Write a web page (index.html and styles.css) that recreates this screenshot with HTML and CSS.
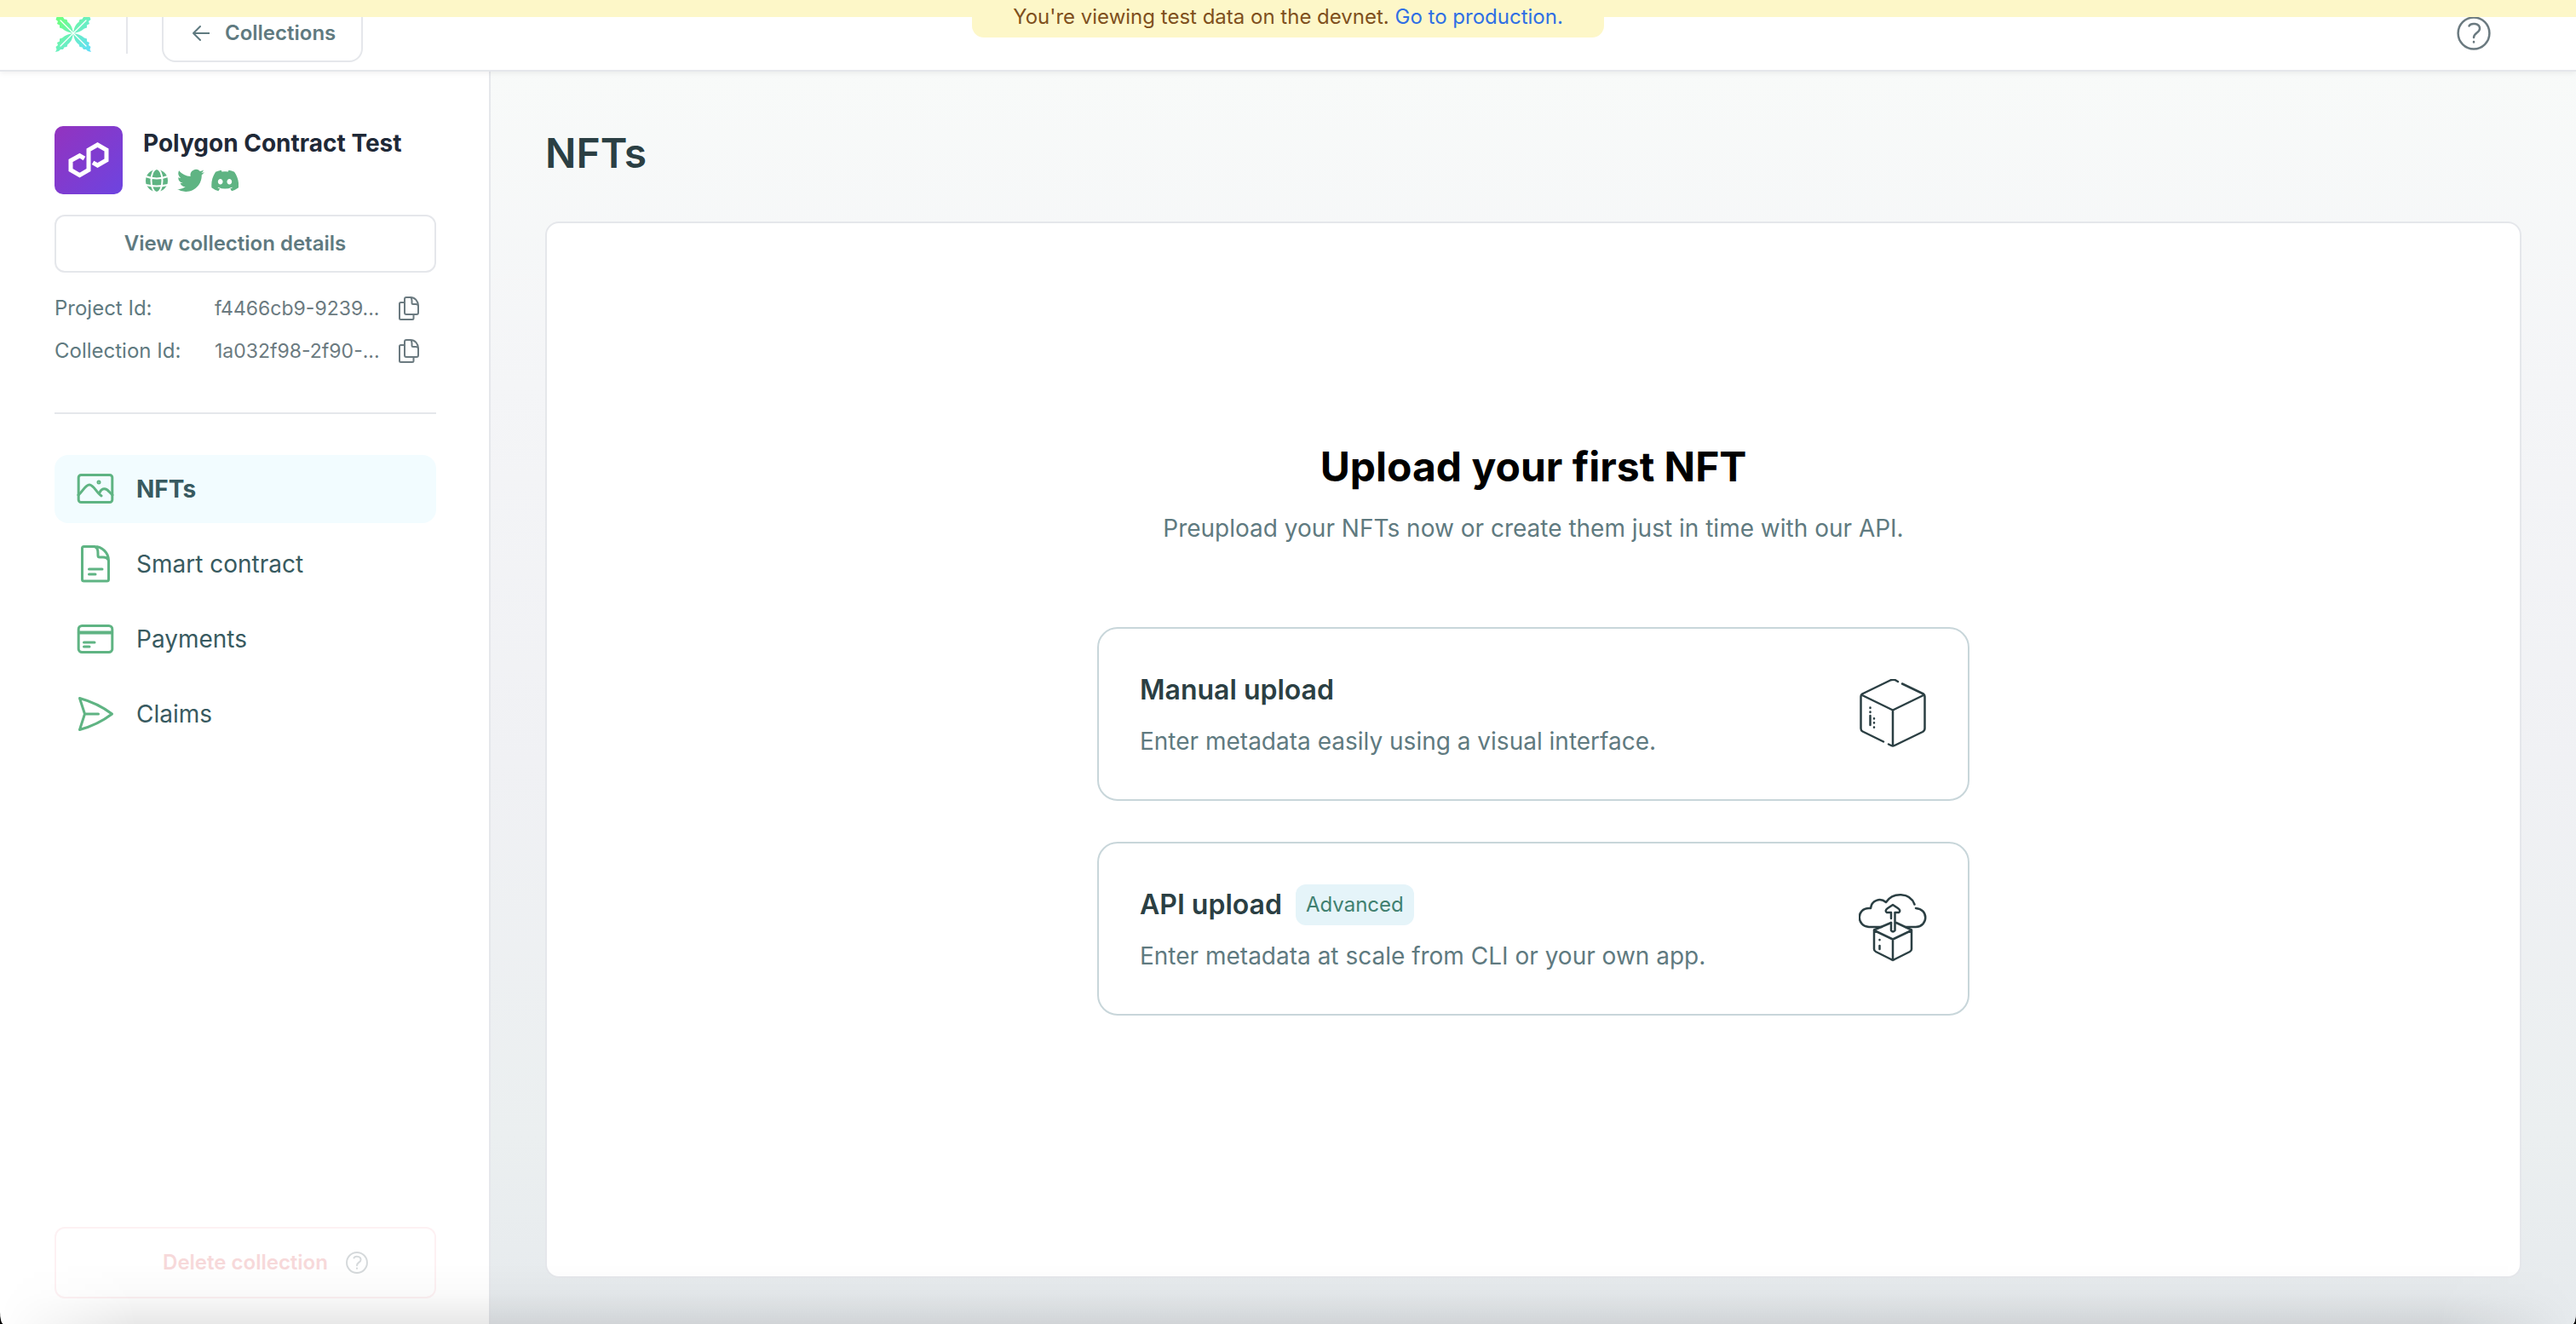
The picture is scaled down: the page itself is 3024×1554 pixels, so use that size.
FILE: index.html
```html
<!DOCTYPE html>
<html lang="en">
<head>
<meta charset="utf-8">
<title>NFTs - Polygon Contract Test</title>
<link rel="stylesheet" href="styles.css">
</head>
<body>
<svg class="sprite" aria-hidden="true">
  <defs>
    <symbol id="help" viewBox="0 0 40 40">
      <circle cx="20" cy="20" r="18.4"/>
      <path d="M14.5 11.5c2-4 12.500-3.500 12.500 3 0 5-7 5-7 10.500"/>
      <path d="M20 30v.6"/>
    </symbol>
    <symbol id="copy" viewBox="0 0 24 28">
      <path d="M7 7H2.500Q1 7 1 8.500V25.500Q1 27 2.500 27H16Q17.500 27 17.500 25.500V21"/>
      <path d="M7 3Q7 1 9 1H14C19 1 23 5.500 23 11V19Q23 21 21 21H9Q7 21 7 19Z"/>
      <path d="M14 1Q15.500 2 15.500 5V7.500Q15.500 9 17 9H20Q22.500 9 23 11"/>
    </symbol>
  </defs>
</svg>

<div class="app">
  <div class="banner">
    <p class="banner-note">You're viewing test data on the devnet. <a href="#">Go to production.</a></p>
  </div>

  <header class="topbar">
    <a class="brand" href="#" aria-label="Home">
      <svg width="44" height="46" viewBox="0 0 44 46">
        <defs>
          <linearGradient id="mint" x1="0" y1="0" x2="1" y2="1">
            <stop offset="0.15" stop-color="#6dff83"/>
            <stop offset="0.5" stop-color="#6bf0bd"/>
            <stop offset="1" stop-color="#5fdcff"/>
          </linearGradient>
          <path id="leaf" d="M22 23C21 30 19 34 15.500 36L14.500 39 11.500 39.500 10 42 7 42 5 44 1 45 2.500 42 1.500 39 4 37 3 34 6 32.500 6 29.500 9 28.500C13 25 17 24 22 23Z"/>
          <clipPath id="leaves">
            <use href="#leaf"/>
            <use href="#leaf" transform="matrix(1 0 0 -1 0 46)"/>
            <use href="#leaf" transform="matrix(-1 0 0 1 44 0)"/>
            <use href="#leaf" transform="rotate(180 22 23)"/>
          </clipPath>
        </defs>
        <rect width="44" height="46" fill="url(#mint)" clip-path="url(#leaves)"/>
        <path d="M7 8 37 38M37 8 7 38" fill="none" stroke="#fff" stroke-width="1.200"/>
      </svg>
    </a>
    <span class="rule"></span>
    <button class="btn back" type="button">
      <svg width="20" height="20" viewBox="0 0 20 20"><path d="M19.500 10H1M9 2 1 10 9 18"/></svg>
      Collections
    </button>
    <button class="help-btn" type="button" aria-label="Help"><svg class="help" width="40" height="40"><use href="#help"/></svg></button>
  </header>

  <div class="body">
    <aside class="sidebar">
      <div class="collection">
        <svg class="avatar" width="80" height="80" viewBox="0 0 80 80">
          <defs><linearGradient id="violet" x1="0" y1="0" x2="1" y2="1"><stop offset="0" stop-color="#9333bf"/><stop offset="1" stop-color="#6d44e0"/></linearGradient></defs>
          <rect width="80" height="80" rx="10" fill="url(#violet)"/>
          <path class="polygon" d="M35 38 29.500 34.700 19 40.500V51.500L29.500 57.600 40 51.500V28L50.500 22 61 28V40L50.500 46 45 42.800"/>
        </svg>
        <div class="collection-info">
          <h2>Polygon Contract Test</h2>
          <div class="socials">
            <a href="#" aria-label="Website"><svg width="32" height="32" viewBox="0 0 32 32"><circle cx="16" cy="16" r="13" fill="#5fb483"/><g fill="none" stroke="#fff" stroke-width="2"><ellipse cx="16" cy="16" rx="6.500" ry="14"/><path d="M3 11Q16 16 29 11M3 21Q16 24 29 21"/></g></svg></a>
            <a href="#" aria-label="Twitter"><svg width="32" height="32" viewBox="0 0 24 24"><path fill="#5fb483" d="M23.950 4.570a10 10 0 0 1-2.820.77 4.960 4.960 0 0 0 2.160-2.720c-.95.550-2 .950-3.130 1.180a4.920 4.920 0 0 0-8.380 4.480C7.690 8.090 4.070 6.130 1.640 3.160a4.920 4.920 0 0 0 1.520 6.570 4.900 4.900 0 0 1-2.230-.61v.06a4.920 4.920 0 0 0 3.950 4.820 5 5 0 0 1-2.210.09 4.940 4.940 0 0 0 4.600 3.420A9.870 9.870 0 0 1 0 19.540a13.990 13.990 0 0 0 7.550 2.210c9.050 0 14-7.500 14-13.980 0-.21 0-.42-.02-.63a9.940 9.940 0 0 0 2.420-2.570Z"/></svg></a>
            <a href="#" aria-label="Discord"><svg width="32" height="32" viewBox="0 0 24 24"><path fill="#5fb483" d="M20.320 4.370a19.800 19.800 0 0 0-4.890-1.520c-.21.380-.45.880-.61 1.260a18.300 18.300 0 0 0-5.490 0 12.600 12.600 0 0 0-.62-1.260 19.700 19.700 0 0 0-4.890 1.520C.73 9.040-.12 13.600.3 18.100a19.900 19.900 0 0 0 5.990 3.030c.48-.66.910-1.360 1.280-2.100a13 13 0 0 1-1.930-.92l.47-.37a14.200 14.200 0 0 0 12.060 0l.47.37c-.62.360-1.260.670-1.930.92.370.740.800 1.440 1.280 2.100a19.800 19.800 0 0 0 6-3.030c.5-5.200-.84-9.720-3.670-13.730ZM8.020 15.330c-1.180 0-2.160-1.080-2.160-2.420s.95-2.420 2.160-2.420 2.180 1.100 2.160 2.420c0 1.340-.95 2.420-2.160 2.420Zm7.970 0c-1.180 0-2.150-1.080-2.150-2.420s.95-2.420 2.150-2.420 2.180 1.100 2.160 2.420c0 1.340-.94 2.420-2.160 2.420Z"/></svg></a>
          </div>
        </div>
      </div>
      <button class="btn details" type="button">View collection details</button>
      <dl class="ids">
        <dt>Project Id:</dt>
        <dd>f4466cb9-9239...</dd>
        <dd><button class="copy" type="button" aria-label="Copy project id"><svg width="24" height="28"><use href="#copy"/></svg></button></dd>
        <dt>Collection Id:</dt>
        <dd>1a032f98-2f90-...</dd>
        <dd><button class="copy" type="button" aria-label="Copy collection id"><svg width="24" height="28"><use href="#copy"/></svg></button></dd>
      </dl>
      <nav class="nav">
        <a class="active" href="#">
          <svg width="44" height="44" viewBox="0 0 44 44"><rect x="2.200" y="5.500" width="39.600" height="32" rx="3"/><path d="M2 29C7 25 10 17 15 17C20 17 23 26 29 30M27 26C30 20 35 21 38 25L42 29"/><circle cx="26" cy="14" r="1" /></svg>
          NFTs
        </a>
        <a href="#">
          <svg width="44" height="44" viewBox="0 0 44 44"><path d="M8.500 1.500H21C30 1.500 37.500 9 37.500 18V40Q37.500 42 35.500 42H8.500Q6.500 42 6.500 40V3.500Q6.500 1.500 8.500 1.500ZM21 1.500C25 3 25 6 25 12Q25 14 27 14H31Q36 14 37.500 18M14.500 28H30M14.500 34H22"/></svg>
          Smart contract
        </a>
        <a href="#">
          <svg width="44" height="44" viewBox="0 0 44 44"><rect x="2.200" y="6.500" width="39.600" height="31" rx="4"/><path d="M3 14.500H41" stroke-width="4"/><path d="M8.500 26H21M8.500 31H15"/></svg>
          Payments
        </a>
        <a href="#">
          <svg width="44" height="44" viewBox="0 0 44 44"><path d="M3.500 3.500C18 7.500 31 14 41.500 22C31 30 18 36.500 3.500 40.500L9.500 22ZM9.500 22H25.500"/></svg>
          Claims
        </a>
      </nav>
      <button class="btn delete" type="button" disabled>Delete collection <svg class="help" width="26" height="26"><use href="#help"/></svg></button>
    </aside>

    <main class="main">
      <h1>NFTs</h1>
      <section class="panel">
        <h2>Upload your first NFT</h2>
        <p class="lead">Preupload your NFTs now or create them just in time with our API.</p>
        <div class="options">
          <button class="option" type="button">
            <span class="option-text">
              <span class="option-title">Manual upload</span>
              <span class="option-desc">Enter metadata easily using a visual interface.</span>
            </span>
            <svg width="80" height="80" viewBox="0 0 80 80"><path d="M46 3 43 1.200Q40 0 37 1.500L4 17.500Q2.500 18.500 2.500 20.500V58Q2.500 60.500 4.500 61.500L29 73.500M35 76.500 38 78Q40 79 42 78L75 62Q77.500 60.500 77.500 58V20.500Q77.500 18.500 76 17.500L51 5.500M3 18.500 40 36.500 77 18.500M40 36.500V78"/><path d="M13.500 43V54M13.500 33.500V34M13.500 38.500V39M18 46.200V46.400M18 51.200V51.400M18 56.600V56.800"/></svg>
          </button>
          <button class="option" type="button">
            <span class="option-text">
              <span class="option-title">API upload <span class="badge">Advanced</span></span>
              <span class="option-desc">Enter metadata at scale from CLI or your own app.</span>
            </span>
            <svg width="80" height="80" viewBox="0 0 80 80"><path d="M27 39H12C-3 38-3 17 12 17H14C15 8 25 4 32 10C40-2 60-2 65.500 12.500M67 17C82 18 82 38 67 39H55"/><path d="M38 34 18 42.500V65Q18 67 20 68L38 77Q40 78.500 42 77L60 68Q62 67 62 65V42.500L44 34M18 43 40 53.500 62 43M40 53.500V78M24.500 61V65M24.500 54V54.300"/><path d="M38 29V22H33Q30 20 34 17L40 13 46 17Q50 20 47 22H42.500V43Q40 46 38 43V34"/></svg>
          </button>
        </div>
      </section>
    </main>
  </div>
</div>
</body>
</html>
```
FILE: styles.css
```css
* { box-sizing: border-box; }

html { background: #000; }

body {
  margin: 0;
  font-family: Inter, "Liberation Sans", sans-serif;
  font-size: 24px;
  line-height: 32px;
  color: #5f7a80;
}

h1, h2, p, dl, dd { margin: 0; }
a { text-decoration: none; }
button { font: inherit; color: inherit; background: none; border: 0; padding: 0; cursor: pointer; }
svg { display: block; flex: none; fill: none; stroke-linecap: round; stroke-linejoin: round; }
.sprite { position: absolute; width: 0; height: 0; }

.app {
  position: relative;
  display: flex;
  flex-direction: column;
  min-height: 100vh;
  background: #fff;
  border-radius: 0 0 4px 4px / 0 0 14px 14px;
  overflow: hidden;
}

.app::after {
  content: "";
  position: absolute;
  inset: auto 0 0;
  height: 72px;
  pointer-events: none;
  background: linear-gradient(to bottom, transparent, rgba(0, 0, 0, 0.02) 50%, rgba(0, 0, 0, 0.09));
  -webkit-mask-image: linear-gradient(to right, transparent, #000 160px, #000 calc(100% - 160px), transparent);
  mask-image: linear-gradient(to right, transparent, #000 160px, #000 calc(100% - 160px), transparent);
}

/* Devnet notice, laid over the top bar */
.banner {
  position: absolute;
  inset: 0 0 auto;
  z-index: 2;
  display: flex;
  justify-content: center;
  height: 20px;
  background: #fdf7c8;
}
.banner-note {
  height: 44px;
  padding: 4px 48px 8px;
  border-radius: 0 0 14px 14px;
  background: #fdf7c8;
  color: #7f501d;
}
.banner-note a { color: #2f6fe4; }

.topbar {
  position: relative;
  z-index: 1;
  display: flex;
  align-items: center;
  height: 84px;
  padding: 0 100px 4px 64px;
  border-bottom: 2px solid #e5e7eb;
  background: #fff;
  box-shadow: 0 2px 6px rgba(0, 0, 0, 0.06);
}
.rule { width: 2px; height: 48px; margin: 0 40px; background: #e5e7eb; }

.btn {
  display: flex;
  align-items: center;
  justify-content: center;
  height: 68px;
  border: 2px solid #e5e7eb;
  border-radius: 12px;
  font-weight: 600;
}
.back { gap: 18px; padding: 0 30px 0 34px; border-radius: 16px; }
.back svg { stroke: currentColor; stroke-width: 2; }
.help { stroke: #6b7a80; stroke-width: 2.500px; }
.help-btn { margin-left: auto; }

.body { flex: 1; display: flex; }

.sidebar {
  flex: none;
  display: flex;
  flex-direction: column;
  width: 576px;
  padding: 64px 62px 30px 64px;
  border-right: 2px solid #e5e7eb;
}
.collection { display: flex; gap: 24px; }
.collection h2 { font-size: 28px; line-height: 40px; font-weight: 700; color: #1f2937; }
.avatar .polygon { stroke: #fff; stroke-width: 5; stroke-linecap: butt; stroke-linejoin: miter; }
.socials { display: flex; gap: 8px; margin-top: 8px; }
.details { margin-top: 24px; padding-right: 24px; }

.ids {
  display: grid;
  grid-template-columns: 188px 208px auto;
  row-gap: 18px;
  align-items: center;
  justify-content: start;
  padding: 26px 0 56px;
  border-bottom: 2px solid #e5e7eb;
}
.ids dd { font-size: 23px; color: #6b7a80; }
.copy { display: block; padding: 0 8px; }
.copy svg { stroke: #6b7a80; stroke-width: 2; }

.nav { display: flex; flex-direction: column; gap: 8px; margin-top: 48px; }
.nav a {
  display: flex;
  align-items: center;
  gap: 26px;
  height: 80px;
  padding: 0 26px;
  border-radius: 16px;
  font-size: 28px;
  color: #385a60;
}
.nav .active { background: #f2fcff; font-weight: 700; }
.nav svg { stroke: #5fb483; stroke-width: 3; }

.delete {
  position: relative;
  height: 84px;
  margin-top: auto;
  border-color: #fdf1f3;
  color: #f7d9da;
}
.delete .help { position: absolute; left: 340px; stroke: #d5d9db; stroke-width: 3px; }

.main {
  flex: 1;
  display: flex;
  flex-direction: column;
  padding: 64px 64px 54px;
  background: linear-gradient(#f8faf9, #f4f5f7 25%, #f0f1f4 55%, #ebeff0 85%, #e6eaed);
}
h1 { font-size: 48px; line-height: 64px; font-weight: 600; color: #2b3f43; }
.panel {
  flex: 1;
  display: flex;
  flex-direction: column;
  align-items: center;
  justify-content: center;
  margin-top: 48px;
  padding-bottom: 52px;
  border: 2px solid #e5e7eb;
  border-radius: 16px;
  background: #fff;
}
.panel h2 { font-size: 48px; line-height: 64px; font-weight: 700; color: #000; }
.lead { margin-top: 20px; font-size: 28px; line-height: 40px; }

.options { display: flex; flex-direction: column; gap: 48px; width: 100%; max-width: 1024px; margin-top: 96px; }
.option {
  display: flex;
  align-items: center;
  justify-content: space-between;
  padding: 46px 48px 48px;
  border: 2px solid #c8d6da;
  border-radius: 24px;
  text-align: left;
}
.option-text { display: flex; flex-direction: column; gap: 14px; }
.option-title { display: flex; align-items: center; gap: 16px; height: 52px; font-size: 32px; line-height: 52px; font-weight: 600; color: #2b3f43; }
.option-desc { font-size: 28px; line-height: 40px; }
.option svg { stroke: #2b3f43; stroke-width: 2.500; }
.badge {
  padding: 8px 12px;
  border-radius: 12px;
  background: #e5f4f9;
  font-size: 24px;
  line-height: 32px;
  font-weight: 400;
  color: #408070;
}
```
